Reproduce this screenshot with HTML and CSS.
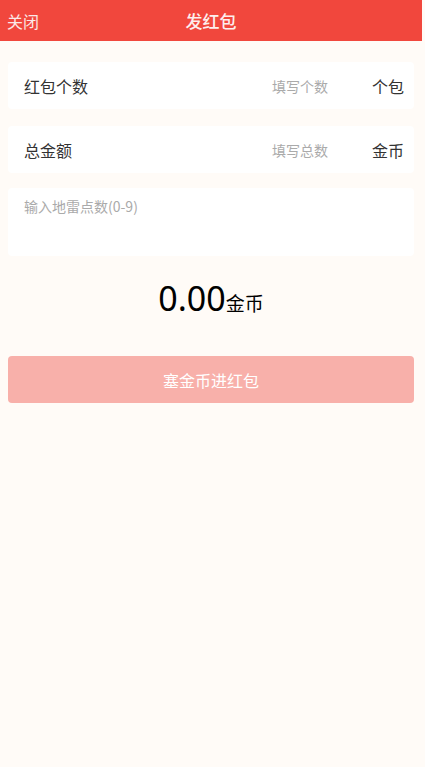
FILE: index.html
```html
<!DOCTYPE html>
<html lang="zh-CN">
<head>
<meta charset="utf-8">
<title>发红包</title>
<link rel="stylesheet" href="styles.css">
</head>
<body>
<div class="page">
  <header class="topbar">
    <span class="close">关闭</span>
    <span class="title">发红包</span>
    <span class="spacer"></span>
  </header>
  <div class="card row">
    <span class="label">红包个数</span>
    <input class="field" type="text" placeholder="填写个数">
    <span class="unit">个包</span>
  </div>
  <div class="card row">
    <span class="label">总金额</span>
    <input class="field" type="text" placeholder="填写总数">
    <span class="unit">金币</span>
  </div>
  <div class="card area">
    <textarea class="mine" placeholder="输入地雷点数(0-9)"></textarea>
  </div>
  <div class="amount"><span class="num">0.00</span><span class="cur">金币</span></div>
  <button class="submit" type="button">塞金币进红包</button>
</div>
</body>
</html>
```
FILE: styles.css
```css
html, body {
  margin: 0;
  padding: 0;
  background: #fffbf7;
  font-family: "Noto Sans CJK SC", "Microsoft YaHei", sans-serif;
}
.page {
  width: 422px;
  min-height: 767px;
  background: #fffbf7;
  display: flex;
  flex-direction: column;
}
.topbar {
  height: 41px;
  background: #f1473d;
  color: #fff;
  display: grid;
  grid-template-columns: 1fr auto 1fr;
  align-items: center;
  font-size: 16px;
}
.close {
  padding-left: 7px;
  color: #fbe9e7;
}
.title {
  font-size: 17px;
  font-weight: 500;
  color: #fdeeed;
}
.card {
  background: #fff;
  margin: 0 8px;
  border-radius: 4px;
}
.row {
  height: 47px;
  display: flex;
  align-items: center;
  padding: 0 10px 0 16px;
  margin-top: 17px;
}
.topbar + .row {
  margin-top: 21px;
}
.label {
  font-size: 16px;
  color: #333;
  white-space: nowrap;
}
.field {
  flex: 1;
  min-width: 0;
  border: none;
  outline: none;
  background: transparent;
  text-align: right;
  font-family: inherit;
  font-size: 14px;
  color: #333;
  padding: 0;
}
.field::placeholder {
  color: #aaa;
}
.unit {
  margin-left: 44px;
  font-size: 16px;
  color: #333;
  white-space: nowrap;
}
.area {
  margin-top: 15px;
  height: 68px;
  padding: 8px 16px;
  box-sizing: border-box;
  display: flex;
}
.mine {
  flex: 1;
  border: none;
  outline: none;
  resize: none;
  background: transparent;
  font-family: inherit;
  font-size: 14px;
  color: #333;
  padding: 0;
}
.mine::placeholder {
  color: #aaa;
}
.amount {
  height: 100px;
  display: flex;
  align-items: baseline;
  justify-content: center;
  padding-top: 20px;
  box-sizing: border-box;
  color: #000;
}
.num {
  font-size: 34px;
  font-family: "Noto Sans", "Noto Sans CJK SC", sans-serif;
  line-height: 44px;
}
.cur {
  font-size: 19px;
}
.submit {
  margin: 0 8px;
  height: 47px;
  border: none;
  border-radius: 4px;
  background: #f8b0aa;
  color: #fff;
  font-family: inherit;
  font-size: 16px;
  padding: 0;
}
```
